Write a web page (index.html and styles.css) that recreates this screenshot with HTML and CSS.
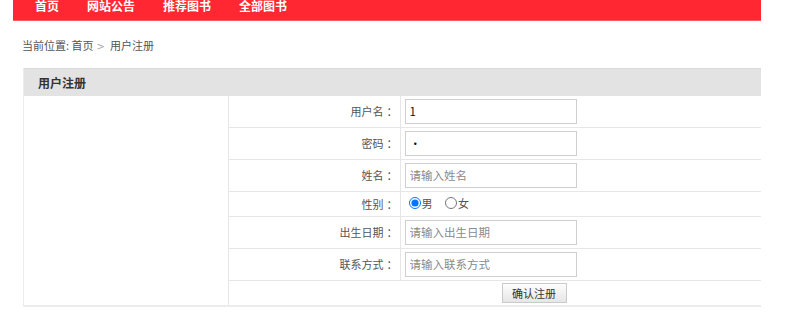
FILE: index.html
```html
<!DOCTYPE html>
<html lang="zh-CN">
<head>
  <meta charset="UTF-8" />
  <title>用户注册</title>
  <link rel="stylesheet" href="styles.css">
</head>
<body>

<div class="wrap">
  <!-- NAV -->
  <div class="nav">
    <a href="#">首页</a>
    <a href="#">网站公告</a>
    <a href="#">推荐图书</a>
    <a href="#">全部图书</a>
  </div>

  <!-- BREADCRUMB -->
  <div class="crumb">当前位置: <a href="#">首页</a><span class="sep">&gt;</span>用户注册</div>

  <!-- REGISTER PANEL -->
  <div class="panel">
    <div class="panel-hd">用户注册</div>
    <form>
      <table class="reg">
        <tr class="first">
          <td class="side" rowspan="7"></td>
          <td class="lbl">用户名<span class="colon">：</span></td>
          <td class="fld"><input type="text" value="1"></td>
        </tr>
        <tr>
          <td class="lbl">密码<span class="colon">：</span></td>
          <td class="fld"><input type="password" value="1"></td>
        </tr>
        <tr>
          <td class="lbl">姓名<span class="colon">：</span></td>
          <td class="fld"><input type="text" placeholder="请输入姓名"></td>
        </tr>
        <tr class="short">
          <td class="lbl">性别<span class="colon">：</span></td>
          <td class="fld">
            <label class="opt"><input type="radio" name="sex" checked>男</label>
            <label class="opt"><input type="radio" name="sex">女</label>
          </td>
        </tr>
        <tr>
          <td class="lbl">出生日期<span class="colon">：</span></td>
          <td class="fld"><input type="text" placeholder="请输入出生日期"></td>
        </tr>
        <tr>
          <td class="lbl">联系方式<span class="colon">：</span></td>
          <td class="fld"><input type="text" placeholder="请输入联系方式"></td>
        </tr>
        <tr class="short">
          <td class="act" colspan="2"><button type="submit">确认注册</button></td>
        </tr>
      </table>
    </form>
  </div>
</div>

</body>
</html>
```

FILE: styles.css
```css
* {
  box-sizing: border-box;
  margin: 0;
  padding: 0;
}
body {
  font-family: "Noto Sans CJK SC", "Liberation Sans", sans-serif;
  font-size: 11px;
  color: #555;
  background: #fff;
}
a {
  color: inherit;
  text-decoration: none;
}

.wrap {
  width: 748px;
  margin-left: 13px;
}

/* NAV */
.nav {
  display: flex;
  height: 32px;
  margin-top: -11px;
  padding-left: 8px;
  background: #ff2832;
  border-bottom: 1px solid #ff5a60;
}
.nav a {
  padding: 0 14px;
  line-height: 34px;
  font-size: 12px;
  font-weight: bold;
  color: #fff;
}

/* BREADCRUMB */
.crumb {
  padding: 16px 0 13px 9px;
  line-height: 16px;
}
.crumb .sep {
  margin: 0 5px 0 3px;
  color: #aaa;
  font-family: "DejaVu Sans", sans-serif;
  font-size: 10px;
}

/* PANEL */
.panel {
  margin-left: 10px;
  border-left: 1px solid #ececec;
  border-bottom: 2px solid #ececec;
}
.panel-hd {
  height: 28px;
  line-height: 27px;
  padding-left: 14px;
  border-top: 1px solid #dadada;
  background: #e3e3e3;
  font-size: 12px;
  font-weight: bold;
  color: #333;
}

.reg {
  width: 100%;
  border-collapse: collapse;
}
.reg td {
  height: 32px;
  border-bottom: 1px solid #e6e6e6;
  vertical-align: middle;
}
.reg .first td {
  height: 31px;
}
.reg tr:last-child td {
  border-bottom: none;
}
.reg .short td {
  height: 25px;
}
.reg .side {
  width: 204px;
  border-right: 1px solid #e6e6e6;
  border-bottom: none;
}
.reg .lbl {
  width: 172px;
  padding-right: 2px;
  text-align: right;
  border-right: 1px solid #e6e6e6;
}
.lbl .colon {
  margin-left: 3px;
}
.reg .fld {
  padding-left: 4px;
}
.fld input[type="text"],
.fld input[type="password"] {
  display: block;
  width: 172px;
  height: 25px;
  padding: 0 4px;
  border: 1px solid #cfcfcf;
  font-family: inherit;
  font-size: 11.5px;
  color: #111;
  outline: none;
}
.fld input::placeholder {
  color: #8a8a8a;
}

.opt {
  display: inline-flex;
  align-items: center;
  margin-right: 6px;
  color: #555;
}
.opt input {
  width: 12px;
  height: 12px;
  margin: 0 1px 0 4px;
}

.reg .act {
  padding-left: 273px;
}
.act button {
  width: 65px;
  height: 20px;
  border: 1px solid #cacaca;
  background: linear-gradient(#fdfdfd, #e6e6e6);
  font-family: inherit;
  font-size: 11px;
  color: #333;
  cursor: pointer;
}
```
